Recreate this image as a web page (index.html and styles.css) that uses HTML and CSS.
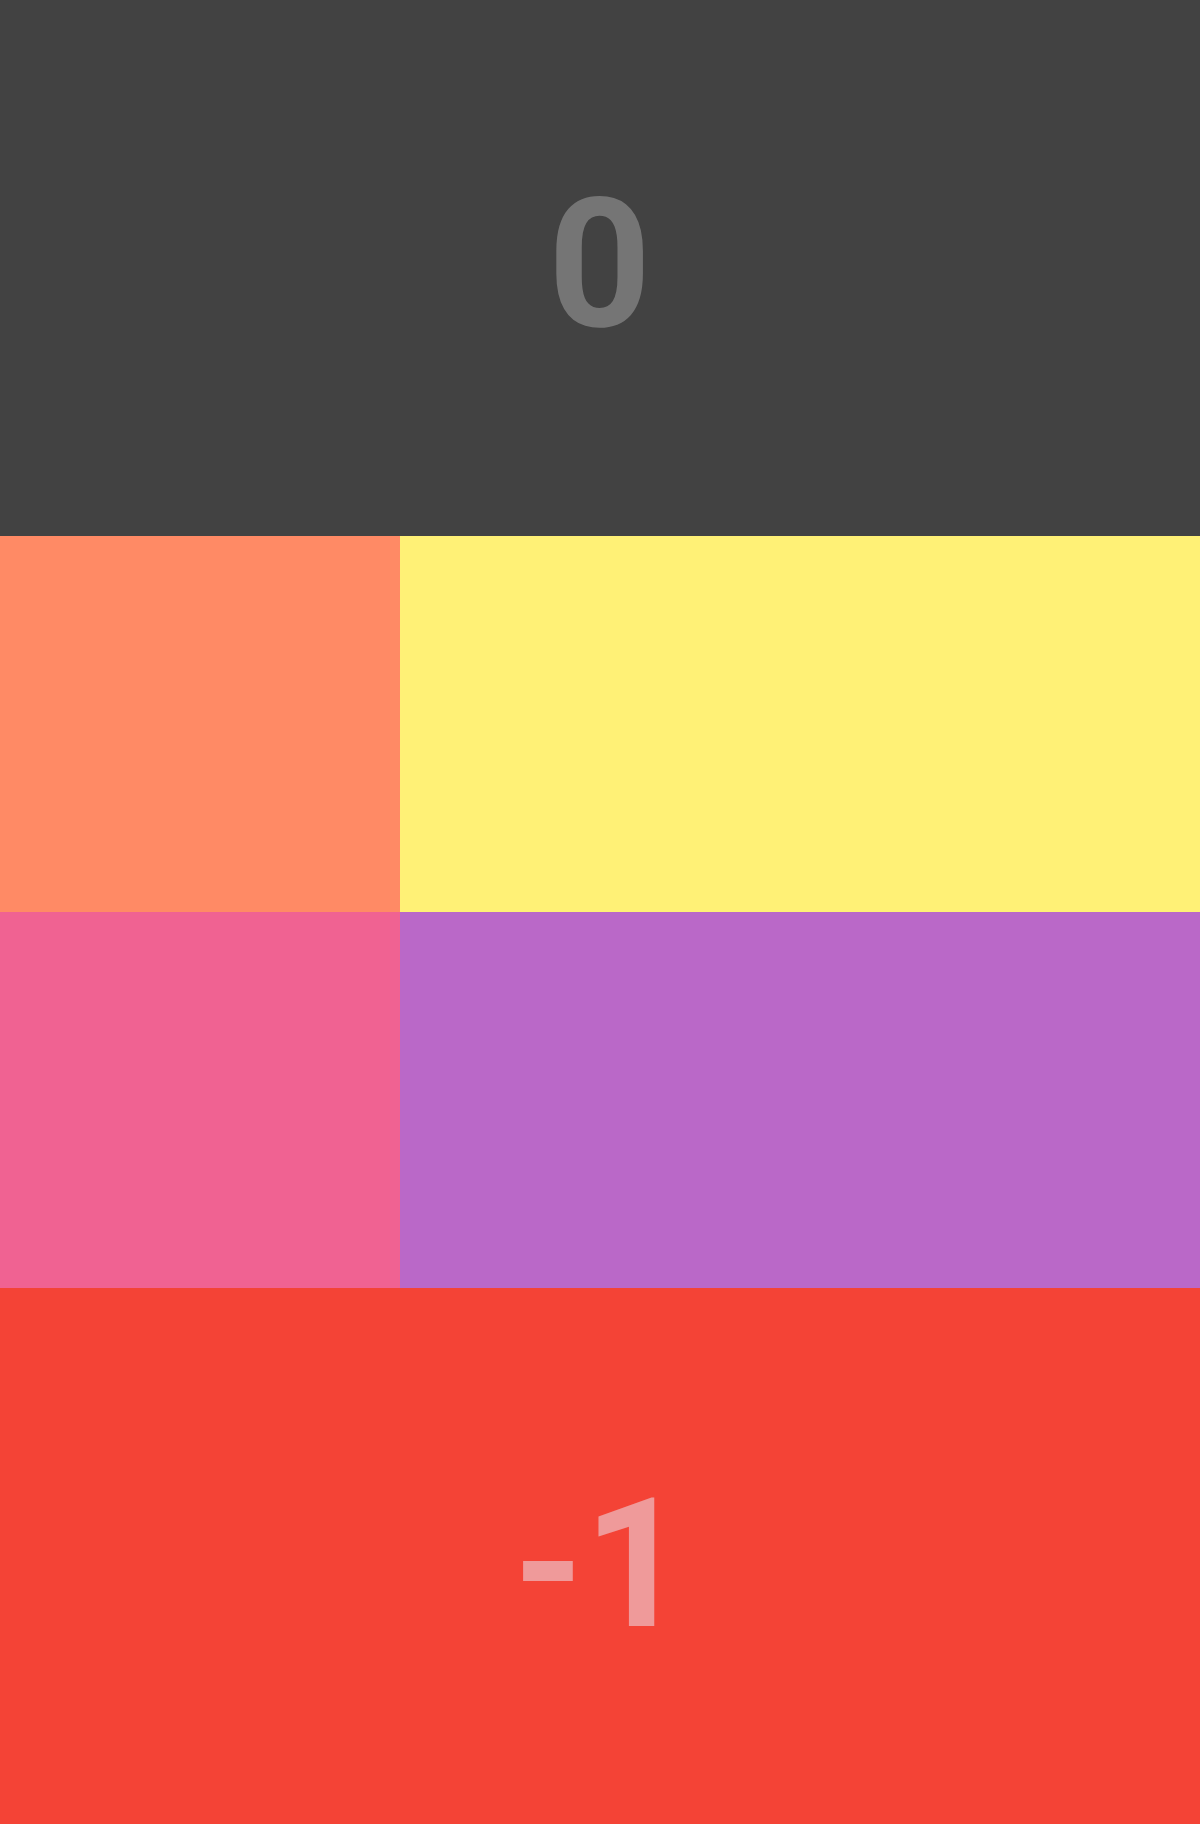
FILE: index.html
```html
<!DOCTYPE html>
<html>
<head>
<meta charset="utf-8">
<link rel="stylesheet" href="styles.css">
</head>
<body>
<div class="app">
  <div class="player player-top"><span class="life life-flipped">0</span></div>
  <div class="tile tile-orange"></div>
  <div class="tile tile-yellow"></div>
  <div class="tile tile-pink"></div>
  <div class="tile tile-purple"></div>
  <div class="player player-bottom"><span class="life">-1</span></div>
</div>
</body>
</html>
```
FILE: styles.css
```css
html, body {
  margin: 0;
  padding: 0;
}
body {
  width: 1200px;
  height: 1824px;
  overflow: hidden;
  font-family: Roboto, "Liberation Sans", sans-serif;
}
.app {
  display: grid;
  grid-template-columns: 400px 800px;
  grid-template-rows: 536px 376px 376px 536px;
  width: 1200px;
  height: 1824px;
}
.player {
  grid-column: 1 / 3;
  display: flex;
  align-items: center;
  justify-content: center;
  box-sizing: border-box;
}
.player-top {
  background: #424242;
  color: #757575;
  padding-bottom: 18px;
}
.player-bottom {
  background: #f44336;
  color: #ef9a9a;
  padding-top: 18px;
}
.life {
  display: block;
  font-size: 180px;
  font-weight: 700;
  line-height: 1;
}
.life-flipped {
  transform: rotate(180deg);
}
.tile-orange { background: #ff8a65; }
.tile-yellow { background: #fff176; }
.tile-pink { background: #f06292; }
.tile-purple { background: #ba68c8; }
```
